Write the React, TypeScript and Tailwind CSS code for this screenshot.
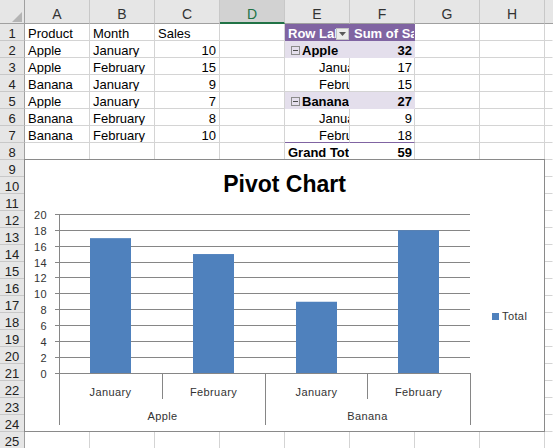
import React from "react";

const COLS = ["A", "B", "C", "D", "E", "F", "G", "H"];
const ROWS = Array.from({ length: 25 }, (_, i) => i + 1);

const sheet: string[][] = [
  ["Product", "Month", "Sales"],
  ["Apple", "January", "10"],
  ["Apple", "February", "15"],
  ["Banana", "January", "9"],
  ["Apple", "January", "7"],
  ["Banana", "February", "8"],
  ["Banana", "February", "10"],
];

type Line = { label: string; value: string; kind: "group" | "item" | "total" };

const pivot: Line[] = [
  { label: "Apple", value: "32", kind: "group" },
  { label: "January", value: "17", kind: "item" },
  { label: "February", value: "15", kind: "item" },
  { label: "Banana", value: "27", kind: "group" },
  { label: "January", value: "9", kind: "item" },
  { label: "February", value: "18", kind: "item" },
  { label: "Grand Total", value: "59", kind: "total" },
];

const GRID_R = "border-r-[#d4d4d4]";
const GRID_B = "border-b-[#d4d4d4]";
const PURPLE_R = "border-r-[#8064a2]";
const PURPLE_B = "border-b-[#8064a2]";
const BAND_R = "border-r-[#e4dfec]";
const BAND_B = "border-b-[#e4dfec]";

function Cell({
    className = "",
    r = GRID_R,
    b = GRID_B,
    children,
}: {
    className?: string;
    r?: string;
    b?: string;
    children?: React.ReactNode;
}) {
    return (
        <div className={`overflow-hidden whitespace-nowrap border-r border-b ${r} ${b} pt-[2px] text-[13px] leading-[15px] ${className}`}>
            {children}
        </div>
    );
}

function Dropdown() {
    return (
        <span className="flex h-[12px] w-[13px] shrink-0 items-center justify-center self-end border border-[#c4c4c4] bg-[#ececec]">
            <svg width="7" height="4" viewBox="0 0 7 4">
                <polygon points="0,0 7,0 3.5,4" fill="#595959" />
            </svg>
        </span>
    );
}

function Toggle() {
    return (
        <span className="flex h-[9px] w-[9px] shrink-0 items-center justify-center border border-[#8c8c8c]">
            <span className="h-px w-[5px] bg-[#4d4d4d]" />
        </span>
    );
}

function PivotCells({ row }: { row: number }) {
    if (row === 1) {
        return (
            <>
                <Cell className="flex bg-[#8064a2] pl-[3px] font-bold text-white" r={PURPLE_R} b={PURPLE_B}>
                    <span className="min-w-0 flex-1 overflow-hidden">Row Labels</span>
                    <Dropdown />
                </Cell>
                <Cell className="bg-[#8064a2] pl-[4px] font-bold text-white" r={PURPLE_R} b={PURPLE_B}>
                    Sum of Sales
                </Cell>
            </>
        );
    }
    const line = pivot[row - 2];
    if (!line) {
        return (
            <>
                <Cell />
                <Cell />
            </>
        );
    }
    if (line.kind === "group") {
        return (
            <>
                <Cell className="flex items-center gap-[2px] bg-[#e4dfec] pl-[6px] font-bold" r={BAND_R} b={BAND_B}>
                    <Toggle />
                    <span>{line.label}</span>
                </Cell>
                <Cell className="bg-[#e4dfec] pr-[2px] text-right font-bold" r={BAND_R} b={BAND_B}>
                    {line.value}
                </Cell>
            </>
        );
    }
    if (line.kind === "total") {
        return (
            <>
                <Cell className="pl-[3px] font-bold" r="border-r-white" b={PURPLE_B}>
                    {line.label}
                </Cell>
                <Cell className="pr-[2px] text-right font-bold" b={PURPLE_B}>
                    {line.value}
                </Cell>
            </>
        );
    }
    const b = row === 7 ? PURPLE_B : GRID_B;
    return (
        <>
            <Cell className="pl-[34px]" b={b}>
                {line.label}
            </Cell>
            <Cell className="pr-[2px] text-right" b={b}>
                {line.value}
            </Cell>
        </>
    );
}

function Row({ row }: { row: number }) {
    const values = sheet[row - 1] ?? [];
    return (
        <>
            <div className="border-r border-b border-r-[#a0a0a0] border-b-[#c8c8c8] bg-[#e6e6e6] pt-[2px] text-center text-[13px] leading-[15px] text-[#222]">
                {row}
            </div>
            <Cell className="px-[3px]">{values[0]}</Cell>
            <Cell className="px-[3px]">{values[1]}</Cell>
            <Cell className={row === 1 ? "px-[3px]" : "pr-[3px] text-right"}>{values[2]}</Cell>
            <Cell />
            <PivotCells row={row} />
            <Cell />
            <Cell />
            <Cell r="border-r-white" />
        </>
    );
}

const Y0 = 213.3;
const UNIT = 7.95;
const yOf = (v: number) => Y0 - v * UNIT;
const bars = [
    { x: 65, v: 17, label: "January" },
    { x: 168, v: 15, label: "February" },
    { x: 271, v: 9, label: "January" },
    { x: 373, v: 18, label: "February" },
];

function Chart() {
    const ticks = Array.from({ length: 11 }, (_, i) => i * 2);
    return (
        <div className="absolute top-[159px] left-[24px] h-[273px] w-[521px] border border-[#8a8a8a] bg-white">
            <svg className="absolute inset-0" width="519" height="271" fontSize="11" letterSpacing="0.4" fill="#333">
                {ticks.map((v) => {
                    const y = Math.floor(yOf(v)) + 0.5;
                    return (
                        <g key={v}>
                            <line x1="30" x2="445" y1={y} y2={y} stroke="#868686" />
                            <text x="22" y={y + 4} textAnchor="end">
                                {v}
                            </text>
                        </g>
                    );
                })}
                {bars.map((b) => (
                    <rect key={b.x} x={b.x} y={yOf(b.v)} width="41" height={213 - yOf(b.v)} fill="#4f81bd" />
                ))}
                <line x1="34.5" x2="34.5" y1="54" y2="265" stroke="#868686" />
                <line x1="240.5" x2="240.5" y1="213" y2="265" stroke="#868686" />
                <line x1="445.5" x2="445.5" y1="213" y2="265" stroke="#868686" />
                <line x1="137.5" x2="137.5" y1="213" y2="239" stroke="#868686" />
                <line x1="342.5" x2="342.5" y1="213" y2="239" stroke="#868686" />
                {bars.map((b) => (
                    <text key={b.x} x={b.x + 20.5} y="236" textAnchor="middle">
                        {b.label}
                    </text>
                ))}
                <text x="137.5" y="260" textAnchor="middle">
                    Apple
                </text>
                <text x="342.5" y="260" textAnchor="middle">
                    Banana
                </text>
                <rect x="467" y="153" width="7" height="7" fill="#4f81bd" />
                <text x="477" y="160">
                    Total
                </text>
            </svg>
            <div className="relative pt-[10px] text-center text-[23px] leading-[28px] font-bold text-black">Pivot Chart</div>
        </div>
    );
}

export default function App() {
    return (
        <div className="relative h-[448px] w-[553px] overflow-hidden bg-white font-['Liberation_Sans',Arial,sans-serif] text-black">
            <div className="grid grid-cols-[25px_repeat(8,65px)_1fr] grid-rows-[24px_repeat(25,17px)]">
                <div className="flex items-end justify-end border-r border-b border-r-[#a0a0a0] border-b-[#a0a0a0] bg-[#e6e6e6] pr-[2px] pb-[1px]">
                    <svg width="10" height="10" viewBox="0 0 10 10">
                        <polygon points="10,0 10,10 0,10" fill="#b4b4b4" />
                    </svg>
                </div>
                {COLS.map((c) =>
                    c === "D" ? (
                        <div
                            key={c}
                            className="border-r border-b-2 border-r-[#c8c8c8] border-b-[#217346] bg-[#d2d2d2] pt-[5px] text-center text-[14px] leading-[18px] text-[#217346]"
                        >
                            {c}
                        </div>
                    ) : (
                        <div
                            key={c}
                            className="border-r border-b border-r-[#c8c8c8] border-b-[#a0a0a0] bg-[#e6e6e6] pt-[5px] text-center text-[14px] leading-[18px] text-[#333]"
                        >
                            {c}
                        </div>
                    )
                )}
                <div className="border-b border-b-[#a0a0a0] bg-[#e6e6e6]" />
                {ROWS.map((r) => (
                    <Row key={r} row={r} />
                ))}
            </div>
            <Chart />
        </div>
    );
}
